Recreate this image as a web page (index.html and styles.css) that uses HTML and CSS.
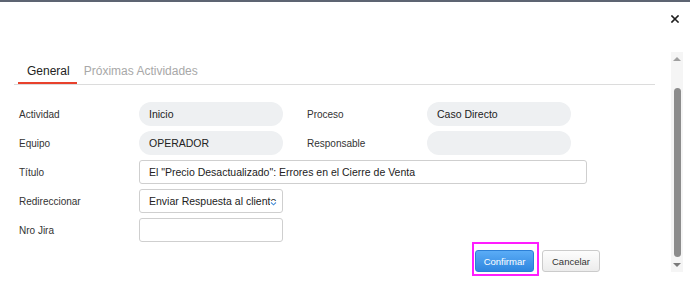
FILE: index.html
```html
<!DOCTYPE html>
<html lang="es">
<head>
    <meta charset="UTF-8">
    <meta name="viewport" content="width=device-width, initial-scale=1.0">
    <title>Gestión de Caso</title>
    <link rel="stylesheet" href="styles.css">
</head>
<body>
    <div class="topbar"></div>
    <div class="dialog">
        <div class="header">
            <button class="close" title="Cerrar">
                <svg width="8" height="8" viewBox="0 0 8 8"><path d="M1 1L7 7M7 1L1 7" stroke="#1f1f1f" stroke-width="1.6" stroke-linecap="square"/></svg>
            </button>
        </div>
        <div class="main">
            <div class="content">
                <div class="tabs">
                    <span class="tab active">General</span>
                    <span class="tab">Próximas Actividades</span>
                </div>
                <div class="form">
                    <div class="row">
                        <label>Actividad</label>
                        <div class="pill">Inicio</div>
                        <label class="second">Proceso</label>
                        <div class="pill">Caso Directo</div>
                    </div>
                    <div class="row">
                        <label>Equipo</label>
                        <div class="pill">OPERADOR</div>
                        <label class="second">Responsable</label>
                        <div class="pill"></div>
                    </div>
                    <div class="row">
                        <label for="titulo">Título</label>
                        <input type="text" id="titulo" class="field wide" value="El &quot;Precio Desactualizado&quot;: Errores en el Cierre de Venta">
                    </div>
                    <div class="row">
                        <label>Redireccionar</label>
                        <div class="field select">
                            <span class="select-text">Enviar Respuesta al cliente</span>
                            <svg class="chevron" width="7" height="5" viewBox="0 0 7 5"><path d="M1 1.5L3.5 3.8L6 1.5" fill="none" stroke="#4a90d9" stroke-width="1.1"/></svg>
                        </div>
                    </div>
                    <div class="row">
                        <label for="jira">Nro Jira</label>
                        <input type="text" id="jira" class="field">
                    </div>
                </div>
                <div class="actions">
                    <span class="highlight"><button class="btn primary">Confirmar</button></span>
                    <button class="btn">Cancelar</button>
                </div>
            </div>
            <div class="scroll">
                <span class="arrow up"></span>
                <div class="thumb"></div>
                <span class="arrow down"></span>
            </div>
        </div>
    </div>
</body>
</html>
```

FILE: styles.css
```css
body {
    margin: 0;
    padding: 0;
    font-family: "Liberation Sans", Arial, sans-serif;
    background-color: #fff;
    color: #333;
}

.topbar {
    height: 2px;
    background-color: #5d6472;
}

.header {
    height: 50px;
    display: flex;
    justify-content: flex-end;
    align-items: flex-start;
    padding-right: 11px;
    box-sizing: border-box;
}

.close {
    margin-top: 13px;
    width: 8px;
    height: 8px;
    padding: 0;
    border: none;
    background: none;
    cursor: pointer;
    display: flex;
}

.main {
    display: flex;
    height: 235px;
}

.content {
    flex: 1;
    padding: 8px 0 0 14px;
}

.tabs {
    display: flex;
    margin-right: 16px;
    border-bottom: 1px solid #dcdcdc;
}

.tab {
    padding: 4px 7px 4px 7px;
    font-size: 12px;
    line-height: 14px;
    color: #a8a8a8;
    border-bottom: 2px solid transparent;
}

.tab.active {
    margin-left: 4px;
    padding-left: 9px;
    color: #222;
    border-bottom-color: #e8412c;
}

.form {
    margin-top: 17px;
    padding-left: 5px;
    display: flex;
    flex-direction: column;
    gap: 5px;
}

.row {
    display: flex;
    align-items: center;
    height: 24px;
}

label {
    width: 120px;
    flex-shrink: 0;
    font-size: 10px;
    color: #333;
}

label.second {
    margin-left: 24px;
}

.pill {
    width: 144px;
    height: 24px;
    box-sizing: border-box;
    padding-left: 10px;
    border-radius: 12px;
    background-color: #eef0f2;
    font-size: 10.5px;
    line-height: 24px;
    color: #222;
}

.field {
    width: 144px;
    height: 24px;
    box-sizing: border-box;
    margin: 0;
    padding: 0 0 0 9px;
    border: 1px solid #cfcfcf;
    border-radius: 3px;
    background-color: #fff;
    font-family: "Liberation Sans", Arial, sans-serif;
    font-size: 10.5px;
    color: #222;
}

.field.wide {
    width: 448px;
}

.select {
    position: relative;
    display: flex;
    align-items: center;
    overflow: hidden;
    white-space: nowrap;
}

.select-text {
    overflow: hidden;
    width: 131px;
}

.chevron {
    position: absolute;
    right: 5px;
    top: 11px;
    background-color: #fff;
}

.actions {
    display: flex;
    justify-content: flex-end;
    gap: 8px;
    margin-top: 8px;
    padding-right: 71px;
}

.highlight {
    position: relative;
    display: flex;
}

.highlight::after {
    content: "";
    position: absolute;
    top: -8px;
    bottom: -4px;
    left: -3px;
    right: -5px;
    border: 2px solid #ff1dff;
}

.btn {
    width: 58px;
    height: 22px;
    padding: 0;
    font-family: "Liberation Sans", Arial, sans-serif;
    font-size: 9.5px;
    color: #333;
    border: 1px solid #cbcbcb;
    border-radius: 3px;
    background: linear-gradient(#fdfdfd, #ececec);
    cursor: pointer;
}

.btn.primary {
    width: 59px;
    color: #fff;
    border-color: #2c7fd6;
    background: linear-gradient(#5aacf6, #2f86df);
}

.scroll {
    width: 12px;
    height: 220px;
    margin-right: 7px;
    padding: 5px 0;
    box-sizing: border-box;
    background-color: #f5f5f5;
    display: flex;
    flex-direction: column;
    align-items: center;
}

.arrow {
    width: 0;
    height: 0;
    border-left: 4px solid transparent;
    border-right: 4px solid transparent;
}

.arrow.up {
    border-bottom: 4px solid #a0a0a0;
}

.arrow.down {
    margin-top: 6px;
    border-top: 4px solid #7a7a7a;
}

.thumb {
    width: 7px;
    height: 169px;
    margin-top: 27px;
    border-radius: 4px;
    background-color: #8c8c8c;
}
```
